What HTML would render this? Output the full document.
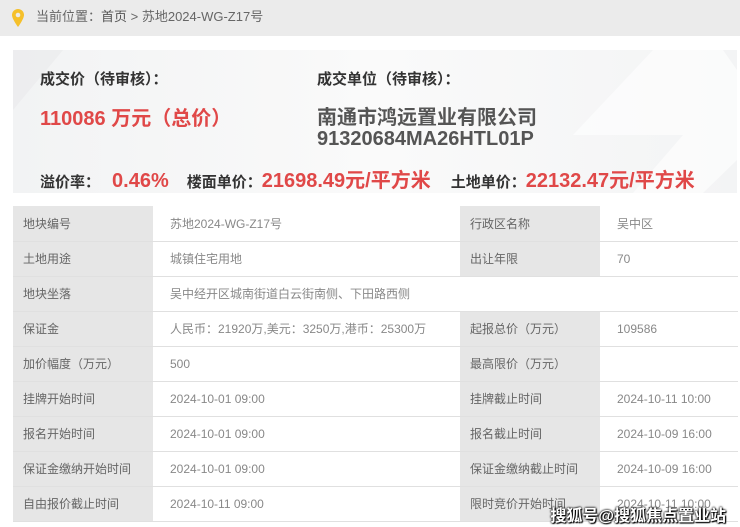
<!DOCTYPE html>
<html><head><meta charset="utf-8"><style>
*{margin:0;padding:0;box-sizing:border-box}
body{width:740px;height:527px;overflow:hidden;background:#fff;font-family:"Liberation Sans","Noto Sans CJK SC",sans-serif;position:relative}
.bc{position:absolute;left:0;top:0;width:740px;height:36px;background:#ebebeb;font-size:13px;color:#666;line-height:34px;padding-left:36px}
.bc b{font-weight:normal;color:#555}
.pin{position:absolute;left:11px;top:8px}
.card{position:absolute;left:13px;top:50px;width:724px;height:143px;background:linear-gradient(90deg,#f2f3f4,#fafafa 50%,#f3f4f5);overflow:hidden}
.t{position:absolute;white-space:nowrap;font-weight:bold}
.red{color:#e04848}
.row{position:absolute;display:flex;align-items:baseline;white-space:nowrap;font-weight:bold}
.row .lb{font-size:15px;color:#333}
.row .v{font-size:20px;color:#e04848}
table{position:absolute;left:13px;top:206px;width:725px;border-collapse:collapse;font-size:12px}
td{height:35px;border-bottom:1px solid #e0e0e0;padding-left:17px;color:#888}
td.l{background:#e6e6e6;color:#666;padding-left:10px}
.wm{position:absolute;right:14px;top:502px;font-size:16px;font-weight:bold;color:#fff;text-shadow:0 0 2px #000,0 0 2px #000,1px 1px 1px #000}
</style></head><body>
<div class="bc"><svg class="pin" width="14" height="20" viewBox="0 0 14 20"><path d="M7 1a6 6 0 0 0-6 6c0 4 6 12 6 12s6-8 6-12a6 6 0 0 0-6-6z" fill="#f5c02b"/><circle cx="7" cy="7" r="2.3" fill="#ebebeb"/></svg>当前位置：<b>首页</b> &gt; 苏地2024-WG-Z17号</div>
<div class="card">
<svg style="position:absolute;left:0;top:0" width="724" height="143"><polygon points="0,0 50,0 0,60" fill="#e9eaeb" opacity=".6"/><polygon points="640,0 710,0 724,20 724,110 690,143 620,143 670,85 560,85 640,0" fill="#fff" opacity=".6"/></svg>
<div class="t" style="left:27px;top:18px;font-size:15px;color:#333">成交价（待审核）：</div>
<div class="t red" style="left:27px;top:52px;font-size:20px">110086 万元（总价）</div>
<div class="t" style="left:304px;top:18px;font-size:15px;color:#333">成交单位（待审核）：</div>
<div class="t" style="left:304px;top:51px;font-size:20px;color:#555">南通市鸿远置业有限公司</div>
<div class="t" style="left:304px;top:78px;font-size:20px;color:#555">91320684MA26HTL01P</div>
</div>
<div class="row" style="left:40px;top:164px">
<span class="lb">溢价率：</span><span class="v" style="margin-left:12px">0.46%</span>
<span class="lb" style="margin-left:18px">楼面单价：</span><span class="v">21698.49元/平方米</span>
<span class="lb" style="margin-left:20px">土地单价：</span><span class="v">22132.47元/平方米</span>
</div>
<table>
<colgroup><col style="width:140px"><col style="width:307px"><col style="width:140px"><col></colgroup>
<tr><td class="l">地块编号</td><td>苏地2024-WG-Z17号</td><td class="l">行政区名称</td><td>吴中区</td></tr>
<tr><td class="l">土地用途</td><td>城镇住宅用地</td><td class="l">出让年限</td><td>70</td></tr>
<tr><td class="l">地块坐落</td><td colspan="3">吴中经开区城南街道白云街南侧、下田路西侧</td></tr>
<tr><td class="l">保证金</td><td>人民币：21920万,美元：3250万,港币：25300万</td><td class="l">起报总价（万元）</td><td>109586</td></tr>
<tr><td class="l">加价幅度（万元）</td><td>500</td><td class="l">最高限价（万元）</td><td></td></tr>
<tr><td class="l">挂牌开始时间</td><td>2024-10-01 09:00</td><td class="l">挂牌截止时间</td><td>2024-10-11 10:00</td></tr>
<tr><td class="l">报名开始时间</td><td>2024-10-01 09:00</td><td class="l">报名截止时间</td><td>2024-10-09 16:00</td></tr>
<tr><td class="l">保证金缴纳开始时间</td><td>2024-10-01 09:00</td><td class="l">保证金缴纳截止时间</td><td>2024-10-09 16:00</td></tr>
<tr><td class="l">自由报价截止时间</td><td>2024-10-11 09:00</td><td class="l">限时竞价开始时间</td><td>2024-10-11 10:00</td></tr>
</table>
<div class="wm">搜狐号@搜狐焦点置业站</div>
</body></html>
